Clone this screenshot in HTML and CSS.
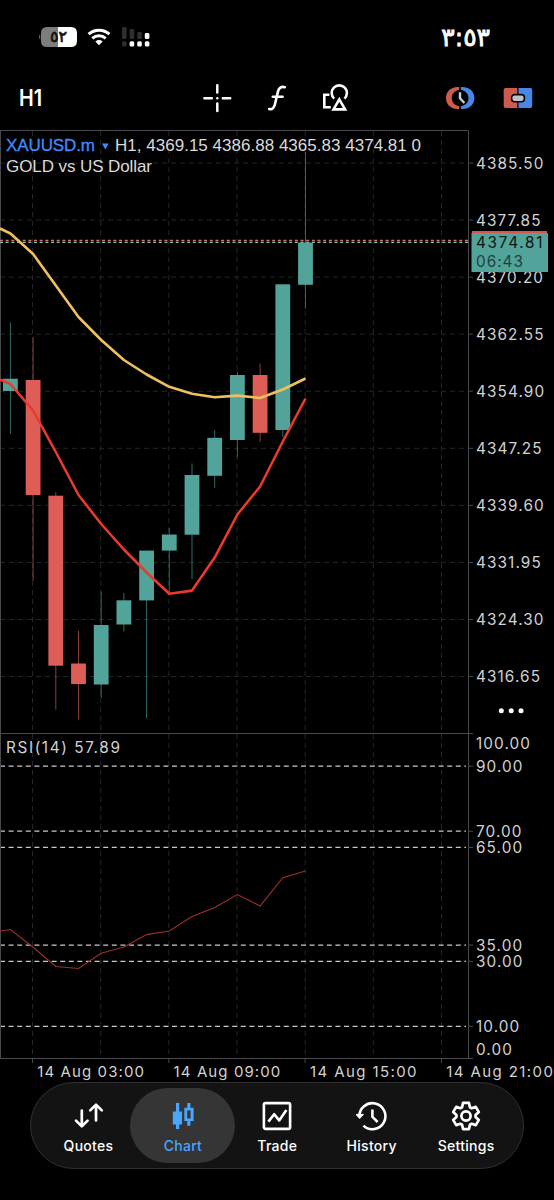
FILE: index.html
```
<!DOCTYPE html>
<html lang="en">
<head>
    <meta charset="UTF-8">
    <meta name="viewport" content="width=device-width, initial-scale=1.0">
    <title>XAUUSD.m Chart</title>
    <link rel="stylesheet" href="styles.css">
</head>
<body>

    <header class="status-bar">
        <div class="status-icons">
            <svg class="battery" width="39" height="20" viewBox="0 0 39 20">
                <path d="M2.2 7 Q0 10 2.2 13 Z" fill="#777"/>
                <path d="M9 0 H20 V20 H9 Q3 20 3 14 V6 Q3 0 9 0 Z" fill="#7d7d7d"/>
                <path d="M20 0 H33 Q39 0 39 6 V14 Q39 20 33 20 H20 Z" fill="#fff"/>
                <text class="battery-text" x="20.5" y="14.5">٥٢</text>
            </svg>
            <svg class="wifi" width="24" height="18" viewBox="0 0 24 18">
                <path d="M1.6 6.2 A15.5 15.5 0 0 1 22.4 6.2" stroke="#fff" stroke-width="3" fill="none"/>
                <path d="M5.3 10.4 A10 10 0 0 1 18.7 10.4" stroke="#fff" stroke-width="2.9" fill="none"/>
                <path d="M12 17.2 L8.3 13.4 Q12 10.6 15.7 13.4 Z" fill="#fff"/>
            </svg>
            <svg class="signal" width="28" height="20" viewBox="0 0 28 20">
                <g fill="#2f2f2f">
                    <rect x="0" y="0" width="4.6" height="12" rx="1.2"/>
                    <rect x="7.6" y="2" width="4.6" height="10" rx="1.2"/>
                    <rect x="15.2" y="5" width="4.6" height="7" rx="1.2"/>
                    <rect x="0" y="14.2" width="4.6" height="5.4" rx="1.5"/>
                </g>
                <g fill="#fff">
                    <rect x="22.8" y="6" width="4.6" height="6" rx="1.4"/>
                    <rect x="7.6" y="14.2" width="4.6" height="5.4" rx="1.5"/>
                    <rect x="15.2" y="14.2" width="4.6" height="5.4" rx="1.5"/>
                    <rect x="22.8" y="14.2" width="4.6" height="5.4" rx="1.5"/>
                </g>
            </svg>
        </div>
        <div class="clock">٣:٥٣</div>
    </header>

    <nav class="toolbar">
        <div class="timeframe"><span>H1</span></div>
        <div class="tools">
            <svg width="30" height="30" viewBox="0 0 30 30" stroke="#fff" stroke-width="2.5" stroke-linecap="round">
                <path d="M15.3 2.2 V9.6 M15.3 20.6 V28 M2.4 15.2 H9.8 M20.8 15.2 H28.2"/>
                <circle cx="15.3" cy="15.2" r="1.2" fill="#fff" stroke="none"/>
            </svg>
            <svg width="22" height="28" viewBox="0 0 22 28" fill="none" stroke="#fff" stroke-width="2.6" stroke-linecap="round" stroke-linejoin="round">
                <path d="M3.2 25 Q7.6 26.2 9 20 L12 7.4 Q13.4 1.8 18.8 3.2 M6.8 12.8 H16.6"/>
            </svg>
            <svg width="28" height="28" viewBox="0 0 28 28" fill="none" stroke="#fff" stroke-width="2.6">
                <path d="M7.4 10.8 H2.3 V23.2 H8.8"/>
                <path d="M12.2 14.6 A7.6 7.6 0 1 1 22.4 14.6"/>
                <path d="M17.3 15.3 L23.1 25.4 H11.5 Z"/>
            </svg>
        </div>
        <div class="trade-tools">
            <svg width="30" height="24" viewBox="0 0 30 24">
                <path d="M14.3 1 C5.5 .4 1 5.8 1 12 S5.5 23.6 14.3 23 V20.3 C9 19 6.8 16 6.8 12 S9 5 14.3 3.7 Z" fill="#cf5b4f"/>
                <path d="M15.9 1 C24.7 .4 29.4 5.8 29.4 12 S24.7 23.6 15.9 23 V20.3 C21.2 19 23.5 16 23.5 12 S21.2 5 15.9 3.7 Z" fill="#4a86e8"/>
                <path d="M15 6.3 V12.3 L19.4 17" fill="none" stroke="#c4cdd3" stroke-width="2.4"/>
            </svg>
            <svg width="30" height="22" viewBox="0 0 30 22">
                <path d="M2.5 1 H14.3 V21 H2.5 Q.7 21 .7 19 V3 Q.7 1 2.5 1 Z" fill="#cf5b4f"/>
                <path d="M15.5 1 H27.3 Q29.2 1 29.2 3 V19 Q29.2 21 27.3 21 H15.5 Z" fill="#4a86e8"/>
                <rect x="8.6" y="7.6" width="12.8" height="7.2" rx="3" fill="#b9c2c9" stroke="#050505" stroke-width="1.6"/>
            </svg>
        </div>
    </nav>

    <main>
        <svg id="chart" class="chart" width="554" height="952" viewBox="0 130 554 952">
            <g id="grid" class="grid"></g>
            <g id="levels" class="levels"></g>
            <path class="frame" d="M0 130.5 H468.5 V1058.5 M.5 130 V1058 M0 733.5 H473 M0 1058.5 H473"/>
            <g id="ticks" class="frame"></g>
            <line class="bid" x1="0" y1="242.4" x2="468" y2="242.4"/>
            <line class="ask" x1="0" y1="240.5" x2="468" y2="240.5"/>
            <g id="candles"></g>
            <polyline id="slow" class="ma slow"/>
            <polyline id="fast" class="ma fast"/>
            <polyline id="rsi" class="rsi"/>

            <text class="symbol" x="6" y="151" textLength="89">XAUUSD.m</text>
            <path d="M102 143.5 H108.6 L105.3 149.6 Z" fill="#3f8cff"/>
            <text class="quote" x="115" y="151" textLength="306">H1, 4369.15 4386.88 4365.83 4374.81 0</text>
            <text class="quote" x="6" y="172" textLength="146">GOLD vs US Dollar</text>
            <text class="axis" x="6" y="753" textLength="115">RSI(14) 57.89</text>

            <g id="labels" class="axis"></g>

            <rect x="472" y="231" width="75" height="5" fill="#d9534f"/>
            <rect x="471.5" y="233" width="76.5" height="39" fill="#52a49a"/>
            <text class="tag" x="476" y="248.3" textLength="67.5">4374.81</text>
            <text class="tag countdown" x="476" y="266.7" textLength="48">06:43</text>

            <g fill="#fff">
                <circle cx="501.3" cy="710.7" r="2.5"/>
                <circle cx="511.2" cy="710.7" r="2.5"/>
                <circle cx="521" cy="710.7" r="2.5"/>
            </g>
        </svg>
    </main>

    <footer class="tab-bar">
        <a class="tab">
            <svg width="30" height="30" viewBox="0 0 30 30" fill="none" stroke="#fff" stroke-width="2.7" stroke-linecap="round" stroke-linejoin="round">
                <path d="M7.8 9.5 V25 M2 19.6 L7.8 25.4 L13.6 19.6 M22 19.5 V4 M16.2 9.4 L22 3.6 L27.8 9.4"/>
            </svg>
            <span>Quotes</span>
        </a>
        <a class="tab active">
            <svg width="30" height="30" viewBox="0 0 30 30" fill="#4aa5ff">
                <path d="M8 2 H11.2 V10.5 H14 V23.5 H11.2 V28 H8 V23.5 H4.8 V10.5 H8 Z"/>
                <path fill-rule="evenodd" d="M19.3 2 H22.4 V6.8 H25.6 V20 H22.4 V24.8 H19.3 V20 H16.3 V6.8 H19.3 Z M19.2 9.4 V17.4 H22.6 V9.4 Z"/>
            </svg>
            <span>Chart</span>
        </a>
        <a class="tab">
            <svg width="30" height="30" viewBox="0 0 30 30" fill="none" stroke="#fff" stroke-width="2.6" stroke-linejoin="round">
                <rect x="1.9" y="2.1" width="26.2" height="25.8" rx="1.6"/>
                <path d="M6.4 20.6 L12.2 13.2 L17.2 19.4 L24.4 9"/>
            </svg>
            <span>Trade</span>
        </a>
        <a class="tab">
            <svg width="32" height="30" viewBox="0 0 32 30" fill="none" stroke="#fff" stroke-width="2.6">
                <path d="M3.4 15.8 A13 13 0 1 1 7.4 24.6"/>
                <path d="M0 13.4 H7.4 L3.7 17.6 Z" fill="#fff" stroke-width="1"/>
                <path d="M16.4 8.4 V15.8 L21.6 21"/>
            </svg>
            <span>History</span>
        </a>
        <a class="tab">
            <svg width="30" height="30" viewBox="0 0 30 30" fill="none" stroke="#fff" stroke-width="2.7" stroke-linejoin="round">
                <path id="gear"/>
                <circle cx="15" cy="15" r="4.6"/>
            </svg>
            <span>Settings</span>
        </a>
    </footer>

    <script>
        const NS = "http://www.w3.org/2000/svg";

        // Each candle: body top, body bottom, wick top, wick bottom, direction
        const candles = [
            [378.7, 391, 322.5, 434, "up"],
            [380, 495, 337, 581, "down"],
            [495.7, 665.7, 492, 709.5, "down"],
            [663.5, 684, 631, 719.5, "down"],
            [625, 684.5, 591.5, 698, "up"],
            [600.3, 624.5, 593, 631.5, "up"],
            [550.6, 600.4, 550.6, 718, "up"],
            [534.5, 550.6, 528, 592, "up"],
            [475, 534.7, 463.5, 579, "up"],
            [437.8, 475.8, 430, 488, "up"],
            [375, 440, 372, 457, "up"],
            [375, 432.8, 363.5, 442, "down"],
            [284.3, 430, 284, 437, "up"],
            [242.6, 284.8, 152, 308.5, "up"]
        ];

        const slow = [233.5, 254, 285.5, 317, 340, 360, 374.5, 386.8, 393.8, 397.2, 395.6, 398, 389.5, 378.5];
        const fast = [384, 410.5, 452, 495, 524, 549.5, 572.5, 593.7, 590.6, 557.6, 514.5, 486.5, 441.5, 398.5];
        const rsi = [929.5, 947.3, 966.5, 968.5, 953.2, 947, 934.6, 931, 916.5, 907.4, 894.5, 906, 877.7, 871];

        const prices = ["4385.50", "4377.85", "4370.20", "4362.55", "4354.90", "4347.25", "4339.60", "4331.95", "4324.30", "4316.65"];
        const rsiLevels = [90, 70, 65, 35, 30, 10];
        const dates = ["14 Aug 03:00", "14 Aug 09:00", "14 Aug 15:00", "14 Aug 21:00"];

        function add(parent, tag, attrs, text) {
            const el = document.createElementNS(NS, tag);
            for (const key in attrs) {
                el.setAttribute(key, attrs[key]);
            }
            if (text) {
                el.textContent = text;
            }
            document.getElementById(parent).appendChild(el);
        }

        function candleX(i) {
            return 10.4 + i * 22.7;
        }

        function drawLine(id, values, firstY) {
            const points = values.map((y, i) => candleX(i) + "," + y);
            document.getElementById(id).setAttribute("points", "0," + firstY + " " + points.join(" "));
        }

        // Price grid and labels
        prices.forEach((price, i) => {
            const y = 163 + i * 57.06;
            add("grid", "line", { x1: 0, y1: y, x2: 468, y2: y });
            add("ticks", "line", { x1: 468, y1: y, x2: 473, y2: y });
            add("labels", "text", { x: 476, y: y + 5.5 }, price);
        });

        // Time grid
        for (let i = 0; i < 7; i++) {
            const x = 32.5 + i * 68.17;
            add("grid", "line", { x1: x, y1: 131, x2: x, y2: 1058 });
        }

        dates.forEach((date, i) => {
            const x = 32.5 + i * 136.3;
            add("ticks", "line", { x1: x, y1: 1058, x2: x, y2: 1063 });
            add("labels", "text", { x: x + 4.8, y: 1076.6, textLength: 107.8, class: "date" }, date);
        });

        // RSI levels
        rsiLevels.forEach(level => {
            const y = 1058.9 - level * 3.253;
            add("levels", "line", { x1: 0, y1: y, x2: 466, y2: y });
            add("ticks", "line", { x1: 468, y1: y, x2: 473, y2: y });
            add("labels", "text", { x: 476, y: y + 5.6 }, level.toFixed(2));
        });
        add("labels", "text", { x: 476, y: 749.4 }, "100.00");
        add("labels", "text", { x: 476, y: 1054.8 }, "0.00");

        // Candles
        candles.forEach(([top, bottom, high, low, dir], i) => {
            const x = candleX(i);
            add("candles", "line", { x1: x, y1: high, x2: x, y2: low, class: "wick " + dir });
            add("candles", "rect", { x: x - 7.4, y: top, width: 14.8, height: bottom - top, class: "body " + dir });
        });

        drawLine("slow", slow, 228.5);
        drawLine("fast", fast, 379.5);
        drawLine("rsi", rsi, 931);

        // Settings gear with six teeth
        const gear = [];
        for (let i = 0; i < 6; i++) {
            [[-24, 9.6], [-13, 13.4], [13, 13.4], [24, 9.6]].forEach(([offset, r]) => {
                const a = (i * 60 - 90 + offset) * Math.PI / 180;
                gear.push((15 + r * Math.cos(a)).toFixed(2) + " " + (15 + r * Math.sin(a)).toFixed(2));
            });
        }
        document.getElementById("gear").setAttribute("d", "M" + gear.join(" L") + " Z");
    </script>

</body>
</html>
```
FILE: styles.css
```
body {
    margin: 0;
    width: 554px;
    height: 1200px;
    overflow: hidden;
    background-color: #000;
    color: #fff;
    font-family: Inter, "Liberation Sans", sans-serif;
}

svg {
    display: block;
}

.status-bar {
    display: flex;
    justify-content: space-between;
    align-items: center;
    height: 74px;
    padding: 0 64px 0 38px;
    box-sizing: border-box;
}

.status-icons {
    display: flex;
    align-items: center;
    gap: 10.4px;
}

.battery-text {
    font: 16px "DejaVu Sans", sans-serif;
    text-anchor: middle;
    fill: #111;
    stroke: #111;
    stroke-width: 0.7;
}

.clock {
    font: 25px "DejaVu Sans", sans-serif;
    letter-spacing: 0.5px;
    -webkit-text-stroke: 0.8px #fff;
}

.toolbar {
    display: flex;
    align-items: center;
    height: 56px;
    padding: 0 21px 8px 19px;
    box-sizing: border-box;
}

.timeframe {
    width: 183px;
    font-size: 23px;
    font-weight: 600;
}

.timeframe span {
    display: inline-block;
    transform: scaleX(0.86);
    transform-origin: left;
}

.tools {
    display: flex;
    align-items: center;
    gap: 34px;
}

.trade-tools {
    display: flex;
    align-items: center;
    gap: 28px;
    margin-left: auto;
}

/* Chart */
.grid line {
    stroke: #23262a;
    stroke-width: 1;
    stroke-dasharray: 5 4;
}

.levels line {
    stroke: #c9c9c9;
    stroke-width: 1.2;
    stroke-dasharray: 5 3.6;
}

.frame {
    fill: none;
    stroke: #48494b;
    stroke-width: 1;
}

.ask,
.bid {
    stroke-width: 1.3;
    stroke-dasharray: 3 2.67;
}

.ask {
    stroke: #d0736c;
}

.bid {
    stroke: #8fbcb3;
}

.wick {
    stroke-width: 1;
}

.wick.up {
    stroke: #2f6b64;
}

.wick.down {
    stroke: #8c3c38;
}

.body.up {
    fill: #52a49a;
}

.body.down {
    fill: #de5e57;
}

.ma {
    fill: none;
    stroke-width: 2.6;
    stroke-linejoin: round;
}

.slow {
    stroke: #f0c060;
}

.fast {
    stroke: #ea3a2c;
}

.rsi {
    fill: none;
    stroke: #a03028;
    stroke-width: 1.1;
}

.symbol,
.quote {
    font-family: "Liberation Sans", Arial, sans-serif;
    font-size: 17px;
}

.symbol {
    fill: #3f8cff;
    stroke: #3f8cff;
    stroke-width: 0.3;
}

.quote {
    fill: #dadada;
}

.axis,
.tag {
    font-size: 15.3px;
    letter-spacing: 1.1px;
    fill: #d2d2d2;
}

.date {
    font-size: 15px;
}

.tag {
    fill: #0c1514;
}

.countdown {
    fill: #1d423e;
}

/* Bottom tabs */
.tab-bar {
    display: flex;
    width: 494px;
    height: 87px;
    margin-left: 30px;
    padding: 5px;
    box-sizing: border-box;
    border: 1px solid #303030;
    border-radius: 44px;
    background-color: #131313;
}

.tab {
    display: flex;
    flex-direction: column;
    align-items: center;
    gap: 6px;
    width: 105px;
    margin-right: -10.6px;
    padding-top: 13px;
    box-sizing: border-box;
    border-radius: 38px;
    font-size: 14px;
    font-weight: 500;
    line-height: 18px;
    letter-spacing: 0.3px;
}

.tab.active {
    background-color: #353535;
    color: #4aa5ff;
}
```
